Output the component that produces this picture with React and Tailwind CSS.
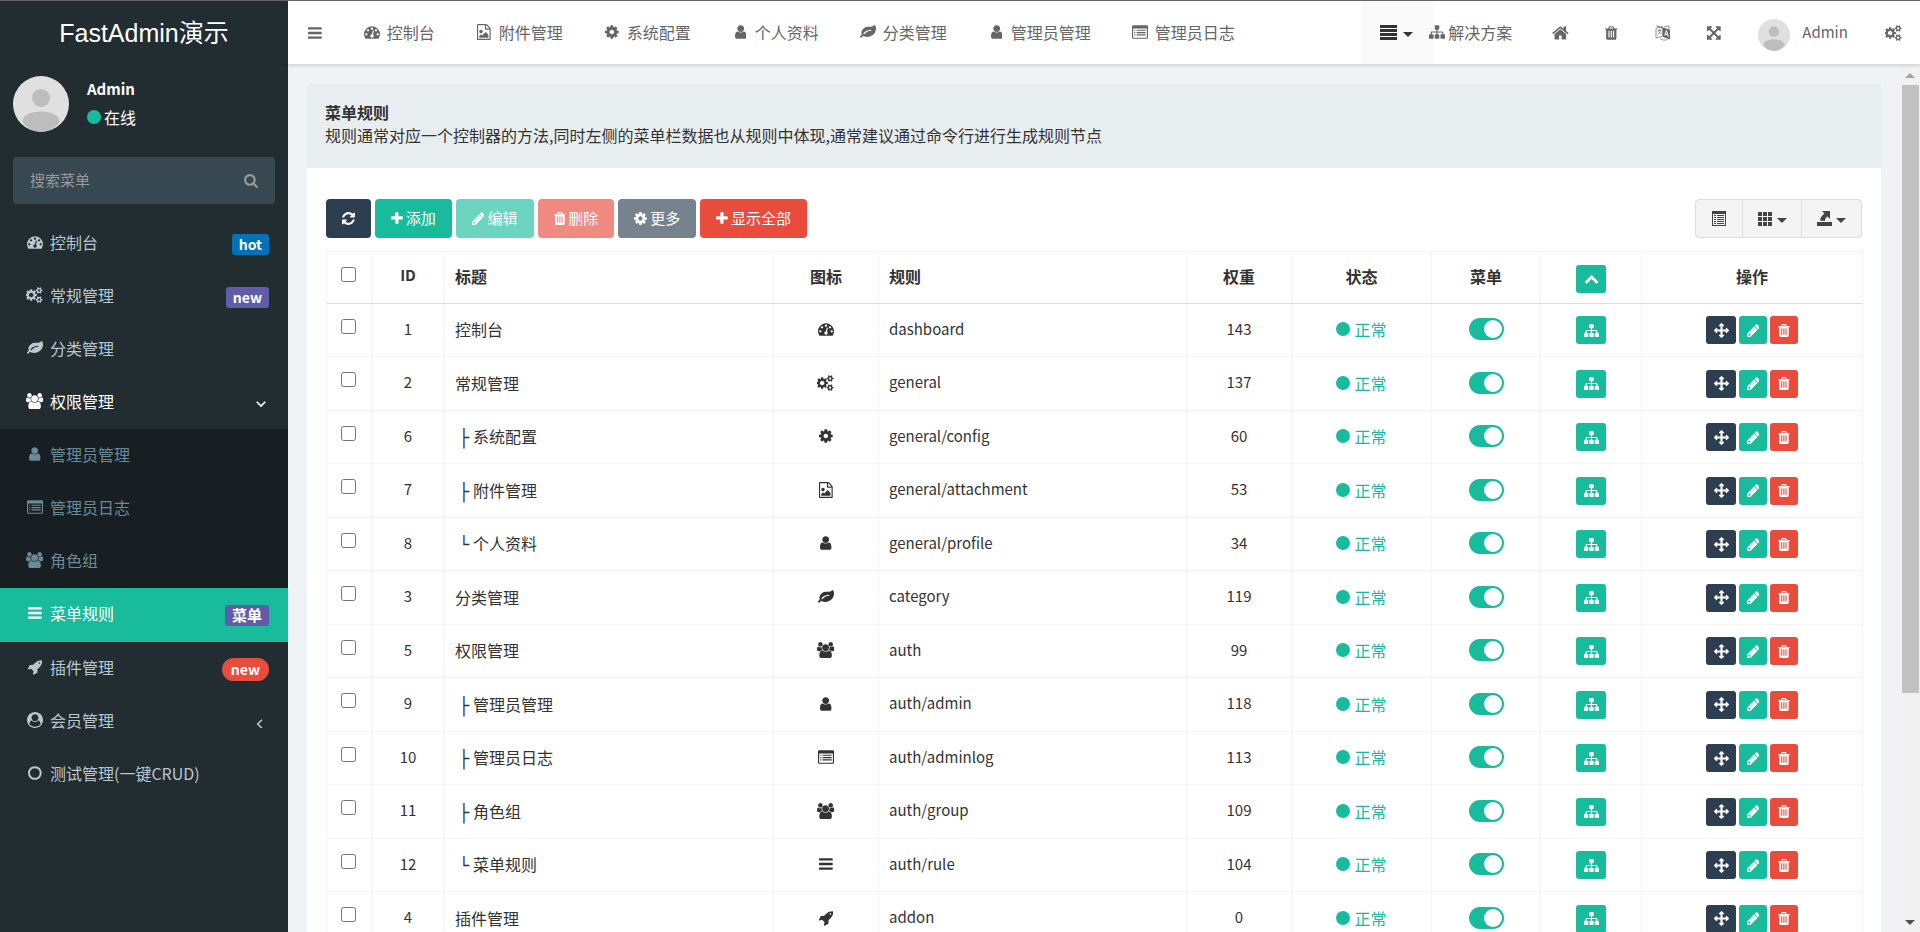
import { useState } from "react";

// x / w: horizontal slice of the 1792 unit grid that the glyph takes up
const ICONS = {
  bars: { x: 128, w: 1536, d: "M1664 1344v128q0 26-19 45t-45 19h-1408q-26 0-45-19t-19-45v-128q0-26 19-45t45-19h1408q26 0 45 19t19 45zm0-512v128q0 26-19 45t-45 19h-1408q-26 0-45-19t-19-45v-128q0-26 19-45t45-19h1408q26 0 45 19t19 45zm0-512v128q0 26-19 45t-45 19h-1408q-26 0-45-19t-19-45v-128q0-26 19-45t45-19h1408q26 0 45 19t19 45z" },
  user: { x: 256, w: 1280, d: "M1536 1399q0 109-62.5 187t-150.5 78h-854q-88 0-150.5-78t-62.5-187q0-85 8.5-160.5t31.5-152 58.5-131 94-89 134.5-34.5q131 128 313 128t313-128q76 0 134.5 34.5t94 89 58.5 131 31.5 152 8.5 160.5zm-256-887q0 159-112.5 271.5t-271.5 112.5-271.5-112.5-112.5-271.5 112.5-271.5 271.5-112.5 271.5 112.5 112.5 271.5z" },
  cog: { x: 128, w: 1536, d: "M1152 896q0-106-75-181t-181-75-181 75-75 181 75 181 181 75 181-75 75-181zm512-109v222q0 12-8 23t-20 13l-185 28q-19 54-39 91 35 50 107 138 10 12 10 25t-9 23q-27 37-99 108t-94 71q-12 0-26-9l-138-108q-44 23-91 38-16 136-29 186-7 28-36 28h-222q-14 0-24.5-8.5t-11.5-21.5l-28-184q-49-16-90-37l-141 107q-10 9-25 9-14 0-25-11-126-114-165-168-7-10-7-23 0-12 8-23 15-21 51-66.5t54-70.5q-27-50-41-99l-183-27q-13-2-21-12.5t-8-23.5v-222q0-12 8-23t19-13l186-28q14-46 39-92-40-57-107-138-10-12-10-24 0-10 9-23 26-36 98.5-107.5t94.5-71.5q13 0 26 10l138 107q44-23 91-38 16-136 29-186 7-28 36-28h222q14 0 24.5 8.5t11.5 21.5l28 184q49 16 90 37l142-107q9-9 24-9 13 0 25 10 129 119 165 170 7 8 7 22 0 12-8 23-15 21-51 66.5t-54 70.5q26 50 41 98l183 28q13 2 21 12.5t8 23.5z" },
  dashboard: { x: 0, w: 1792, d: "M384 1152q0-53-37.5-90.5t-90.5-37.5-90.5 37.5-37.5 90.5 37.5 90.5 90.5 37.5 90.5-37.5 37.5-90.5zm192-448q0-53-37.5-90.5t-90.5-37.5-90.5 37.5-37.5 90.5 37.5 90.5 90.5 37.5 90.5-37.5 37.5-90.5zm428 481l101-382q6-26-7.5-48.5t-38.5-29.5-48 6.5-30 39.5l-101 382q-60 5-107 43.5t-63 98.5q-20 77 20 146t117 89 146-20 89-117q16-60-6-117t-72-91zm660-33q0-53-37.5-90.5t-90.5-37.5-90.5 37.5-37.5 90.5 37.5 90.5 90.5 37.5 90.5-37.5 37.5-90.5zm-640-640q0-53-37.5-90.5t-90.5-37.5-90.5 37.5-37.5 90.5 37.5 90.5 90.5 37.5 90.5-37.5 37.5-90.5zm448 192q0-53-37.5-90.5t-90.5-37.5-90.5 37.5-37.5 90.5 37.5 90.5 90.5 37.5 90.5-37.5 37.5-90.5zm320 448q0 261-141 483-19 29-54 29h-1402q-35 0-54-29-141-221-141-483 0-182 71-348t191-286 286-191 348-71 348 71 286 191 191 286 71 348z" },
  pencil: { x: 128, w: 1536, d: "M491 1536l91-91-235-235-91 91v107h128v128h107zm523-928q0-22-22-22-10 0-17 7l-542 542q-7 7-7 17 0 22 22 22 10 0 17-7l542-542q7-7 7-17zm-54-192l416 416-832 832h-416v-416zm683 96q0 53-37 90l-166 166-416-416 166-165q36-38 90-38 53 0 91 38l235 234q37 39 37 91z" },
  trash: { x: 192, w: 1408, d: "M704 1376v-704q0-14-9-23t-23-9h-64q-14 0-23 9t-9 23v704q0 14 9 23t23 9h64q14 0 23-9t9-23zm256 0v-704q0-14-9-23t-23-9h-64q-14 0-23 9t-9 23v704q0 14 9 23t23 9h64q14 0 23-9t9-23zm256 0v-704q0-14-9-23t-23-9h-64q-14 0-23 9t-9 23v704q0 14 9 23t23 9h64q14 0 23-9t9-23zm-544-992h448l-48-117q-7-9-17-11h-317q-10 2-17 11zm928 32v64q0 14-9 23t-23 9h-96v948q0 83-47 143.5t-113 60.5h-832q-66 0-113-58.5t-47-141.5v-952h-96q-14 0-23-9t-9-23v-64q0-14 9-23t23-9h309l70-167q15-37 54-63t79-26h320q40 0 79 26t54 63l70 167h309q14 0 23 9t9 23z" },
  refresh: { x: 128, w: 1536, d: "M1639 1056q0 5-1 7-64 268-268 434.5t-478 166.5q-146 0-282.5-55t-243.5-157l-129 129q-19 19-45 19t-45-19-19-45v-448q0-26 19-45t45-19h448q26 0 45 19t19 45-19 45l-137 137q71 66 161 102t187 36q134 0 250-65t186-179q11-17 53-117 8-23 30-23h192q13 0 22.5 9.5t9.5 22.5zm25-800v448q0 26-19 45t-45 19h-448q-26 0-45-19t-19-45 19-45l138-138q-148-137-349-137-134 0-250 65t-186 179q-11 17-53 117-8 23-30 23h-199q-13 0-22.5-9.5t-9.5-22.5v-7q65-268 270-434.5t480-166.5q146 0 284 55.5t245 156.5l130-129q19-19 45-19t45 19 19 45z" },
  plus: { x: 192, w: 1408, d: "M1600 736v192q0 40-28 68t-68 28h-416v416q0 40-28 68t-68 28h-192q-40 0-68-28t-28-68v-416h-416q-40 0-68-28t-28-68v-192q0-40 28-68t68-28h416v-416q0-40 28-68t68-28h192q40 0 68 28t28 68v416h416q40 0 68 28t28 68z" },
  sitemap: { x: 0, w: 1792, d: "M1792 1248v320q0 40-28 68t-68 28h-320q-40 0-68-28t-28-68v-320q0-40 28-68t68-28h96v-192h-512v192h96q40 0 68 28t28 68v320q0 40-28 68t-68 28h-320q-40 0-68-28t-28-68v-320q0-40 28-68t68-28h96v-192h-512v192h96q40 0 68 28t28 68v320q0 40-28 68t-68 28h-320q-40 0-68-28t-28-68v-320q0-40 28-68t68-28h96v-192q0-52 38-90t90-38h512v-192h-96q-40 0-68-28t-28-68v-320q0-40 28-68t68-28h320q40 0 68 28t28 68v320q0 40-28 68t-68 28h-96v192h512q52 0 90 38t38 90v192h96q40 0 68 28t28 68z" },
  arrows: { x: 0, w: 1792, d: "M1792 896q0 26-19 45l-256 256q-19 19-45 19t-45-19-19-45v-128h-384v384h128q26 0 45 19t19 45-19 45l-256 256q-19 19-45 19t-45-19l-256-256q-19-19-19-45t19-45 45-19h128v-384h-384v128q0 26-19 45t-45 19-45-19l-256-256q-19-19-19-45t19-45l256-256q19-19 45-19t45 19 19 45v128h384v-384h-128q-26 0-45-19t-19-45 19-45l256-256q19-19 45-19t45 19l256 256q19 19 19 45t-19 45-45 19h-128v384h384v-128q0-26 19-45t45-19 45 19l256 256q19 19 19 45z" },
  expand: { x: 128, w: 1536, d: "M1411 541l-355 355 355 355 144-144q29-31 70-14 39 17 39 59v448q0 26-19 45t-45 19h-448q-42 0-59-40-17-39 14-69l144-144-355-355-355 355 144 144q31 30 14 69-17 40-59 40h-448q-26 0-45-19t-19-45v-448q0-42 40-59 39-17 69 14l144 144 355-355-355-355-144 144q-19 19-45 19-12 0-24-5-40-17-40-59v-448q0-26 19-45t45-19h448q42 0 59 40 17 39-14 69l-144 144 355 355 355-355-144-144q-31-30-14-69 17-40 59-40h448q26 0 45 19t19 45v448q0 42-39 59-13 5-25 5-26 0-45-19z" },
  home: { x: 64, w: 1664, d: "M1472 992v480q0 26-19 45t-45 19h-384v-384h-256v384h-384q-26 0-45-19t-19-45v-480q0-1 .5-3t.5-3l575-474 575 474q1 2 1 6zm223-69l-62 74q-8 9-21 11h-3q-13 0-21-7l-692-577-692 577q-12 8-24 7-13-2-21-11l-62-74q-8-10-7-23.5t11-21.5l719-599q32-26 76-26t76 26l244 204v-195q0-14 9-23t23-9h192q14 0 23 9t9 23v408l219 182q10 8 11 21.5t-7 23.5z" },
  search: { x: 64, w: 1664, d: "M1216 832q0-185-131.5-316.5t-316.5-131.5-316.5 131.5-131.5 316.5 131.5 316.5 316.5 131.5 316.5-131.5 131.5-316.5zm512 832q0 52-38 90t-90 38q-54 0-90-38l-343-342q-179 124-399 124-143 0-273.5-55.5t-225-150-150-225-55.5-273.5 55.5-273.5 150-225 225-150 273.5-55.5 273.5 55.5 225 150 150 225 55.5 273.5q0 220-124 399l343 343q37 37 37 90z" },
  cogs: { x: 0, w: 1920, d: "M832 896q0-106-75-181t-181-75-181 75-75 181 75 181 181 75 181-75 75-181zm768 512q0-52-38-90t-90-38-90 38-38 90q0 53 37.5 90.5t90.5 37.5 90.5-37.5 37.5-90.5zm0-1024q0-52-38-90t-90-38-90 38-38 90q0 53 37.5 90.5t90.5 37.5 90.5-37.5 37.5-90.5zm-384 421v185q0 10-7 19.5t-16 10.5l-155 24q-11 35-32 76 34 48 90 115 7 11 7 20 0 12-7 19-23 30-82.5 89.5t-78.5 59.5q-11 0-21-7l-115-90q-37 19-77 31-11 108-23 155-7 24-30 24h-186q-11 0-20-7.5t-10-17.5l-23-153q-34-10-75-31l-118 89q-7 7-20 7-11 0-21-8-144-133-144-160 0-9 7-19 10-14 41-53t47-61q-23-44-35-82l-152-24q-10-1-17-9.5t-7-19.5v-185q0-10 7-19.5t16-10.5l155-24q11-35 32-76-34-48-90-115-7-11-7-20 0-12 7-20 22-30 82-89t79-59q11 0 21 7l115 90q34-18 77-32 11-108 23-154 7-24 30-24h186q11 0 20 7.5t10 17.5l23 153q34 10 75 31l118-89q8-7 20-7 11 0 21 8 144 133 144 160 0 8-7 19-12 16-42 54t-45 60q23 48 34 82l152 23q10 2 17 10.5t7 19.5zm640 533v140q0 16-149 31-12 27-30 52 51 113 51 138 0 4-4 7-122 71-124 71-8 0-46-47t-52-68q-20 2-30 2t-30-2q-14 21-52 68t-46 47q-2 0-124-71-4-3-4-7 0-25 51-138-18-25-30-52-149-15-149-31v-140q0-16 149-31 13-29 30-52-51-113-51-138 0-4 4-7 4-2 35-20t59-34 30-16q8 0 46 46.5t52 67.5q20-2 30-2t30 2q51-71 92-112l6-2q4 0 124 70 4 3 4 7 0 25-51 138 17 23 30 52 149 15 149 31zm0-1024v140q0 16-149 31-12 27-30 52 51 113 51 138 0 4-4 7-122 71-124 71-8 0-46-47t-52-68q-20 2-30 2t-30-2q-14 21-52 68t-46 47q-2 0-124-71-4-3-4-7 0-25 51-138-18-25-30-52-149-15-149-31v-140q0-16 149-31 13-29 30-52-51-113-51-138 0-4 4-7 4-2 35-20t59-34 30-16q8 0 46 46.5t52 67.5q20-2 30-2t30 2q51-71 92-112l6-2q4 0 124 70 4 3 4 7 0 25-51 138 17 23 30 52 149 15 149 31z" },
  leaf: { x: 0, w: 1792, d: "M1280 704q0-26-19-45t-45-19q-172 0-318 49.5t-259.5 134-235.5 219.5q-19 21-19 45 0 26 19 45t45 19q24 0 45-19 27-24 74-71t67-66q137-124 268.5-176t313.5-52q26 0 45-19t19-45zm512-198q0 95-20 193-46 224-184.5 383t-357.5 268q-214 108-438 108-148 0-286-47-15-5-88-42t-96-37q-16 0-39.5 32t-45 70-52.5 70-60 32q-43 0-63.5-17.5t-45.5-59.5q-2-4-6-11t-5.5-10-3-9.5-1.5-13.5q0-35 31-73.5t68-65.5 68-56 31-48q0-4-14-38t-16-44q-9-51-9-104 0-115 43.5-220t119-184.5 170.5-139 204-95.5q55-18 145-25.5t179.5-9 178.5-6 163.5-24 113.5-56.5l29.5-29.5 29.5-28 27-20 36.5-16 43.5-4.5q39 0 70.5 46t47.5 112 24 124 8 96z" },
  users: { x: 0, w: 1920, d: "M593 896q-162 5-265 128h-134q-82 0-138-40.5t-56-118.5q0-353 124-353 6 0 43.5 21t97.5 42.5 119 21.5q67 0 133-23-5 37-5 66 0 159 93 294zm1071 637q0 120-73 189.5t-194 69.5h-874q-121 0-194-69.5t-73-189.5q0-53 3.5-103.5t14-109 26.5-108.5 43-97.5 62-81 85.5-53.5 111.5-20q10 0 43 21.5t73 48 107 48 135 21.5 135-21.5 107-48 73-48 43-21.5q61 0 111.5 20t85.5 53.5 62 81 43 97.5 26.5 108.5 14 109 3.5 103.5zm-1024-1277q0 106-75 181t-181 75-181-75-75-181 75-181 181-75 181 75 75 181zm704 384q0 159-112.5 271.5t-271.5 112.5-271.5-112.5-112.5-271.5 112.5-271.5 271.5-112.5 271.5 112.5 112.5 271.5zm576 225q0 78-56 118.5t-138 40.5h-134q-103-123-265-128 93-135 93-294 0-29-5-66 66 23 133 23 59 0 119-21.5t97.5-42.5 43.5-21q124 0 124 353zm-128-609q0 106-75 181t-181 75-181-75-75-181 75-181 181-75 181 75 75 181z" },
  listAlt: { x: 0, w: 1792, d: "M160 128h1472q66 0 113 47t47 113v1216q0 66-47 113t-113 47h-1472q-66 0-113-47t-47-113v-1216q0-66 47-113t113-47zm-32 384v992q0 32 32 32h1472q32 0 32-32v-992zM256 640h128v128h-128zM256 896h128v128h-128zM256 1152h128v128h-128zM512 640h1024v128h-1024zM512 896h1024v128h-1024zM512 1152h1024v128h-1024z" },
  fileImage: { x: 128, w: 1536, d: "M1596 380q28 28 48 76t20 88v1152q0 40-28 68t-68 28h-1344q-40 0-68-28t-28-68v-1600q0-40 28-68t68-28h896q40 0 88 20t76 48zm-444-244v376h376q-10-29-22-41l-313-313q-12-12-41-22zm384 1528v-1024h-416q-40 0-68-28t-28-68v-416h-768v1536h1280zm-128-448v320h-1024v-192l192-192 128 128 384-384zm-832-192q-80 0-136-56t-56-136 56-136 136-56 136 56 56 136-56 136-136 56z" },
  rocket: { x: 64, w: 1664, d: "M1440 448q0-40-28-68t-68-28-68 28-28 68 28 68 68 28 68-28 28-68zm224-288q0 249-75.5 430.5t-253.5 360.5q-81 80-195 176l-20 379q-2 16-16 26l-384 224q-7 4-16 4-12 0-23-9l-64-64q-13-14-8-32l85-276-281-281-276 85q-3 1-9 1-14 0-23-9l-64-64q-17-19-5-39l224-384q10-14 26-16l379-20q96-114 176-195 188-187 358-258t431-71q14 0 24 9.5t10 22.5z" },
  userCircle: { x: 0, w: 1792, d: "M1523 1339q-22-155-87.5-257.5t-184.5-118.5q-67 74-159.5 115.5t-195.5 41.5-195.5-41.5-159.5-115.5q-119 16-184.5 118.5t-87.5 257.5q106 150 271 237.5t356 87.5 356-87.5 271-237.5zm-243-699q0-159-112.5-271.5t-271.5-112.5-271.5 112.5-112.5 271.5 112.5 271.5 271.5 112.5 271.5-112.5 112.5-271.5zm512 256q0 182-71 347.5t-190.5 286-285.5 191.5-349 71q-182 0-348-71t-286-191-191-286-71-348 71-348 191-286 286-191 348-71 348 71 286 191 191 286 71 348z" },
  circleO: { x: 128, w: 1536, d: "M896 352q-148 0-273 73t-198 198-73 273 73 273 198 198 273 73 273-73 198-198 73-273-73-273-198-198-273-73zm768 544q0 209-103 385.5t-279.5 279.5-385.5 103-385.5-103-279.5-279.5-103-385.5 103-385.5 279.5-279.5 385.5-103 385.5 103 279.5 279.5 103 385.5z" },
  chevronUp: { x: 0, w: 1792, d: "M1683 1331l-166 165q-19 19-45 19t-45-19l-531-531-531 531q-19 19-45 19t-45-19l-166-165q-19-19-19-45.5t19-45.5l742-741q19-19 45-19t45 19l742 741q19 19 19 45.5t-19 45.5z" },
};

const Icon = ({ name, className = "h-4" }) => {
  const { x, w, d } = ICONS[name];
  return (
    <svg viewBox={`${x} 0 ${w} 1792`} className={`w-auto shrink-0 ${className}`} fill="currentColor" fillRule="evenodd" aria-hidden="true">
      <path d={d} />
    </svg>
  );
};

const Caret = () => (
  <svg viewBox="0 0 10 5" className="mt-1 h-[5px] w-[10px]" fill="currentColor" aria-hidden="true">
    <path d="M0 0h10L5 5z" />
  </svg>
);

const Avatar = ({ className }) => (
  <svg viewBox="0 0 56 56" className={`shrink-0 rounded-full ${className}`} aria-hidden="true">
    <rect width="56" height="56" fill="#e0e0e0" />
    <circle cx="28" cy="22" r="9" fill="#bdbdbd" />
    <path d="M9.500 46c0-7 8-10.500 18.500-10.500S46.500 39 46.500 46c-4 6-11 10-18.500 10s-14.500-4-18.500-10z" fill="#bdbdbd" />
  </svg>
);

const LanguageIcon = () => (
  <svg viewBox="0 0 16 16" className="size-4" fill="none" stroke="currentColor" aria-hidden="true">
    <path d="M1 3.500v9.500l6.500-2V1.500z" strokeWidth=".7" />
    <path d="M1.500 1l6 2" strokeWidth="1" />
    <path d="M2.500 6l4-1.200M4.500 4v1.500M5.700 5.200c-.5 2-1.500 3.300-3 4.200M3.500 6.500c.8 1 1.700 1.800 3 2.200" strokeWidth=".7" />
    <path d="M8 2.500l7 2.300v9.700l-7-2.500z" fill="currentColor" stroke="none" />
    <path d="M9.700 10.500l1.700-5 2 6.200M10.300 9l2.300.8" stroke="#fff" strokeWidth="1" />
    <path d="M9 2l5-1.200v3.500M5 13.500c2 1.800 5 2 7.500 1" strokeWidth=".7" />
  </svg>
);

const MENU = [
  { icon: "dashboard", text: "控制台", badge: "hot", tone: "bg-[#0073b7] text-sm" },
  { icon: "cogs", text: "常规管理", badge: "new", tone: "bg-[#605ca8] text-sm" },
  { icon: "leaf", text: "分类管理" },
  { icon: "users", text: "权限管理", arrow: "down" },
  { icon: "user", text: "管理员管理", sub: true },
  { icon: "listAlt", text: "管理员日志", sub: true },
  { icon: "users", text: "角色组", sub: true },
  { icon: "bars", text: "菜单规则", badge: "菜单", tone: "bg-[#605ca8] text-[15px]", active: true },
  { icon: "rocket", text: "插件管理", badge: "new", pill: true },
  { icon: "userCircle", text: "会员管理", arrow: "left" },
  { icon: "circleO", text: "测试管理(一键CRUD)" },
];

const TABS = [
  ["dashboard", "控制台"],
  ["fileImage", "附件管理"],
  ["cog", "系统配置"],
  ["user", "个人资料"],
  ["leaf", "分类管理"],
  ["user", "管理员管理"],
  ["listAlt", "管理员日志"],
];

const ROWS = [
  { id: 1, title: "控制台", icon: "dashboard", rule: "dashboard", weigh: 143 },
  { id: 2, title: "常规管理", icon: "cogs", rule: "general", weigh: 137 },
  { id: 6, branch: "├", title: "系统配置", icon: "cog", rule: "general/config", weigh: 60 },
  { id: 7, branch: "├", title: "附件管理", icon: "fileImage", rule: "general/attachment", weigh: 53 },
  { id: 8, branch: "└", title: "个人资料", icon: "user", rule: "general/profile", weigh: 34 },
  { id: 3, title: "分类管理", icon: "leaf", rule: "category", weigh: 119 },
  { id: 5, title: "权限管理", icon: "users", rule: "auth", weigh: 99 },
  { id: 9, branch: "├", title: "管理员管理", icon: "user", rule: "auth/admin", weigh: 118 },
  { id: 10, branch: "├", title: "管理员日志", icon: "listAlt", rule: "auth/adminlog", weigh: 113 },
  { id: 11, branch: "├", title: "角色组", icon: "users", rule: "auth/group", weigh: 109 },
  { id: 12, branch: "└", title: "菜单规则", icon: "bars", rule: "auth/rule", weigh: 104 },
  { id: 4, title: "插件管理", icon: "rocket", rule: "addon", weigh: 0 },
];

const menuTone = (item) => {
  if (item.active) return "h-[54px] bg-[#18bc9c] text-white";
  if (item.sub) return "h-[53px] bg-[#181f23] text-[#6a8a98]";
  if (item.arrow === "down") return "h-[53px] text-white";
  return "h-[53px] text-[#b8c7ce]";
};

const Sidebar = () => (
  <aside className="flex w-72 shrink-0 flex-col bg-[#222d32] text-white">
    <a href="#" className="flex h-16 shrink-0 items-center justify-center border-b border-[#1f292e] pb-2 pt-2 font-['Liberation_Sans','Noto_Sans_CJK_SC',sans-serif] text-[25px] leading-8">
      FastAdmin演示
    </a>
    <div className="flex items-center gap-[18px] px-[13px] pt-[10px]">
      <Avatar className="size-14" />
      <div className="pb-0.5">
        <p className="text-[15px] font-bold leading-7">Admin</p>
        <a href="#" className="flex items-center gap-[3px] leading-7">
          <span className="size-[14px] rounded-full bg-[#18bc9c]" />
          在线
        </a>
      </div>
    </div>
    <form className="mx-[13px] mb-[13px] mt-6 flex h-[47px] shrink-0 items-center rounded-[4px] bg-[#374850]">
      <input
        type="text"
        aria-label="搜索菜单"
        placeholder="搜索菜单"
        className="h-full min-w-0 flex-1 bg-transparent pb-0.5 pl-[17px] text-[15px] outline-none placeholder:text-[#999]"
      />
      <button type="button" aria-label="搜索" className="px-[17px] text-[#999]">
        <Icon name="search" className="h-[15px]" />
      </button>
    </form>
    <nav>
      {MENU.map((item) => (
        <a key={item.text} href="#" className={`flex items-center pb-1 pl-[25px] pr-[19px] ${menuTone(item)}`}>
          <span className="mr-[5px] flex w-5 justify-center">
            <Icon name={item.icon} />
          </span>
          <span className="flex-1">{item.text}</span>
          {item.badge && !item.pill && (
            <span className={`mt-[5px] flex h-[21px] items-center rounded-[3px] px-[7px] font-bold text-white ${item.tone}`}>
              {item.badge}
            </span>
          )}
          {item.pill && (
            <span className="mt-[5px] flex h-[23px] items-center rounded-full bg-[#e74c3c] px-[9px] text-sm font-bold text-white">
              {item.badge}
            </span>
          )}
          {item.arrow && (
            <svg viewBox="0 0 10 10" className="mr-[3px] mt-[7px] size-[10px]" fill="none" stroke="currentColor" strokeWidth="1.6" aria-hidden="true">
              <path d={item.arrow === "down" ? "M.7 2.700L5 7l4.300-4.300" : "M6 1.700L1.700 6 6 10.300"} />
            </svg>
          )}
        </a>
      ))}
    </nav>
  </aside>
);

const Header = () => (
  <header className="z-10 flex h-[63px] shrink-0 items-center bg-white text-[#666] shadow-[0_1px_4px_rgba(0,21,41,0.2)]">
    <button type="button" aria-label="切换菜单" className="px-5">
      <Icon name="bars" />
    </button>
    <nav className="ml-px flex gap-px pb-0.5">
      {TABS.map(([icon, text]) => (
        <a key={text} href="#" className="flex items-center gap-1 px-[19px]">
          <span className="flex w-[21px] justify-center">
            <Icon name={icon} />
          </span>
          {text}
        </a>
      ))}
    </nav>
    <div className="ml-auto flex h-full items-center">
      <button type="button" aria-label="标签列表" className="flex h-full w-[71px] items-center gap-1.5 bg-[#f9f9f9] pl-[18px] text-[#333]">
        <svg viewBox="0 0 17 15" className="h-[15px] w-[17px]" fill="currentColor" aria-hidden="true">
          <path d="M0 0h17v3H0zM0 4h17v3H0zM0 8h17v3H0zM0 12h17v3H0z" />
        </svg>
        <Caret />
      </button>
      <a href="#" className="-ml-1 flex items-center gap-[3px] pb-0.5 pr-[23px]">
        <Icon name="sitemap" />
        解决方案
      </a>
      <a href="#" aria-label="主页" className="flex w-[51px] justify-center"><Icon name="home" className="h-[18px]" /></a>
      <a href="#" aria-label="清除缓存" className="flex w-[51px] justify-center"><Icon name="trash" /></a>
      <a href="#" aria-label="语言" className="flex w-[51px] justify-center"><LanguageIcon /></a>
      <a href="#" aria-label="全屏" className="flex w-[51px] justify-center"><Icon name="expand" /></a>
      <a href="#" className="flex items-center gap-3 px-[19px] text-[15px]">
        <Avatar className="mt-1 size-8" />
        Admin
      </a>
      <button type="button" aria-label="设置" className="px-[18px]"><Icon name="cogs" /></button>
    </div>
  </header>
);

const ToolButton = ({ icon, tone, children, label }) => (
  <button type="button" aria-label={label} className={`flex h-[39px] items-center gap-[3px] rounded-[4px] px-4 text-[15px] text-white ${tone}`}>
    <Icon name={icon} className="h-[15px]" />
    {children}
  </button>
);

const Toolbar = () => (
  <div className="flex items-center justify-between">
    <div className="flex gap-1">
      <ToolButton icon="refresh" tone="bg-[#2c3e50]" label="刷新" />
      <ToolButton icon="plus" tone="bg-[#18bc9c]">添加</ToolButton>
      <ToolButton icon="pencil" tone="bg-[#6bd5c0]">编辑</ToolButton>
      <ToolButton icon="trash" tone="bg-[#f08a80]">删除</ToolButton>
      <ToolButton icon="cog" tone="bg-[#76828e]">更多</ToolButton>
      <ToolButton icon="plus" tone="bg-[#e74c3c]">显示全部</ToolButton>
    </div>
    <div className="flex h-[39px] divide-x divide-[#ddd] rounded-[4px] border border-[#ddd] bg-[#f4f4f4] text-[#444]">
      <button type="button" aria-label="切换视图" className="flex w-[47px] items-center justify-center">
        <svg viewBox="0 0 14 15" className="h-[15px] w-[14px]" fill="currentColor" fillRule="evenodd" aria-hidden="true">
          <path d="M0 0h14v15H0zM1 3v11h12V3zM2 4h2v1H2zM5 4h7v1H5zM2 6h2v1H2zM5 6h7v1H5zM2 8h2v1H2zM5 8h7v1H5zM2 10h2v1H2zM5 10h7v1H5zM2 12h2v1H2zM5 12h7v1H5z" />
        </svg>
      </button>
      <button type="button" aria-label="列" className="flex w-[59px] items-center justify-center gap-[5px]">
        <svg viewBox="0 0 14 14" className="size-[14px]" fill="currentColor" aria-hidden="true">
          <path d="M0 0h4v4H0zM5 0h4v4H5zM10 0h4v4h-4zM0 5h4v4H0zM5 5h4v4H5zM10 5h4v4h-4zM0 10h4v4H0zM5 10h4v4H5zM10 10h4v4h-4z" />
        </svg>
        <Caret />
      </button>
      <button type="button" aria-label="导出数据" className="flex w-[59px] items-center justify-center gap-1">
        <svg viewBox="0 0 15 15" className="size-[15px]" fill="currentColor" aria-hidden="true">
          <path d="M0 11h15v4H0zM5 0h8v8l-2.500-2.500C8 7.500 8 8.500 8 10L3 9.500C3.200 6.500 5 4.500 7.500 2.500z" />
        </svg>
        <Caret />
      </button>
    </div>
  </div>
);

const SmallButton = ({ icon, tone, label }) => (
  <button type="button" aria-label={label} className={`flex h-7 items-center justify-center rounded-[3px] text-white ${tone}`}>
    <Icon name={icon} className="h-[15px]" />
  </button>
);

const Switch = ({ label }) => {
  const [on, setOn] = useState(true);
  return (
    <button
      type="button"
      role="switch"
      aria-checked={on}
      aria-label={label}
      onClick={() => setOn(!on)}
      className={`flex h-[22px] w-[35px] items-center rounded-full p-0.5 ${on ? "justify-end bg-[#18bc9c]" : "bg-gray-400"}`}
    >
      <span className="size-[18px] rounded-full bg-white" />
    </button>
  );
};

const RuleTable = () => (
  <table className="mt-[13px] w-full table-fixed border-collapse text-[#333] [&_td]:border [&_td]:border-[#f4f4f4] [&_td]:pb-0.5 [&_th]:border [&_th]:border-[#f4f4f4] [&_th]:border-b-[#ddd] [&_th]:pb-1">
    <colgroup>
      <col className="w-[45px]" />
      <col className="w-[73px]" />
      <col className="w-[329px]" />
      <col className="w-[105px]" />
      <col className="w-[308px]" />
      <col className="w-[105px]" />
      <col className="w-[140px]" />
      <col className="w-[109px]" />
      <col className="w-[101px]" />
      <col className="w-[221px]" />
    </colgroup>
    <thead>
      <tr className="h-[52px]">
        <th className="pb-1.5! pr-0.5">
          <input type="checkbox" aria-label="全选" className="mx-auto block size-[15px]" />
        </th>
        <th className="text-[15px]">ID</th>
        <th className="px-[10px] text-left">标题</th>
        <th>图标</th>
        <th className="px-[10px] text-left">规则</th>
        <th>权重</th>
        <th>状态</th>
        <th>菜单</th>
        <th className="pb-0!">
          <div className="flex justify-center pt-0.5">
            <SmallButton icon="chevronUp" tone="w-[30px] bg-[#18bc9c]" label="全部收起" />
          </div>
        </th>
        <th>操作</th>
      </tr>
    </thead>
    <tbody>
      {ROWS.map((row) => (
        <tr key={row.id} className="h-[53px] text-center even:h-[54px]">
          <td className="pb-2! pr-0.5">
            <input type="checkbox" aria-label={row.rule} className="mx-auto block size-[15px]" />
          </td>
          <td className="text-[15px]">{row.id}</td>
          <td className="px-[10px] text-left">
            {row.branch && (
              <>
                &nbsp;<span className="font-['Liberation_Mono',monospace] text-[18px] leading-none">{row.branch}</span>{" "}
              </>
            )}
            {row.title}
          </td>
          <td>
            <div className="flex justify-center">
              <Icon name={row.icon} />
            </div>
          </td>
          <td className="px-[10px] text-left text-[15px]">{row.rule}</td>
          <td className="text-[15px]">{row.weigh}</td>
          <td>
            <div className="flex items-center justify-center gap-1 text-[#18bc9c]">
              <span className="size-[14px] rounded-full bg-[#18bc9c]" />
              正常
            </div>
          </td>
          <td>
            <div className="flex justify-center">
              <Switch label={row.rule} />
            </div>
          </td>
          <td className="pb-0!">
            <div className="flex justify-center">
              <SmallButton icon="sitemap" tone="w-[30px] bg-[#18bc9c]" label="子菜单" />
            </div>
          </td>
          <td className="pb-0!">
            <div className="flex justify-center gap-[3px]">
              <SmallButton icon="arrows" tone="w-[30px] bg-[#2c3e50]" label="拖动" />
              <SmallButton icon="pencil" tone="w-7 bg-[#18bc9c]" label="编辑" />
              <SmallButton icon="trash" tone="w-7 bg-[#e74c3c]" label="删除" />
            </div>
          </td>
        </tr>
      ))}
    </tbody>
  </table>
);

const Scrollbar = () => (
  <div className="flex w-5 shrink-0 flex-col items-center bg-[#f1f1f1]">
    <svg viewBox="0 0 20 21" className="h-[21px] w-5 shrink-0" fill="#a3a3a3" aria-hidden="true">
      <path d="M5 14h10L10 9z" />
    </svg>
    <div className="h-[70%] w-[17px] bg-[#c1c1c1]" />
    <svg viewBox="0 0 20 21" className="mt-auto h-[21px] w-5 shrink-0" fill="#505050" aria-hidden="true">
      <path d="M5 9h10l-5 5z" />
    </svg>
  </div>
);

function App() {
  return (
    <div className="flex h-screen overflow-hidden border-t border-[#66646a] bg-[#eff3f6] font-['Noto_Sans_CJK_SC',sans-serif] text-base">
      <Sidebar />
      <div className="flex min-w-0 flex-1 flex-col">
        <Header />
        <div className="flex min-h-0 flex-1">
          <main className="min-w-0 flex-1 overflow-hidden px-[19px] pt-[19px]">
            <section className="rounded-[3px] bg-white">
              <div className="rounded-t-[3px] bg-[#e8edf0] px-[18px] pb-[21px] pt-[18px] leading-[23px] text-[#333]">
                <h1 className="font-bold">菜单规则</h1>
                <p>规则通常对应一个控制器的方法,同时左侧的菜单栏数据也从规则中体现,通常建议通过命令行进行生成规则节点</p>
              </div>
              <div className="px-[19px] pb-5 pt-[31px]">
                <Toolbar />
                <RuleTable />
              </div>
            </section>
          </main>
          <Scrollbar />
        </div>
      </div>
    </div>
  );
}

export default App;
